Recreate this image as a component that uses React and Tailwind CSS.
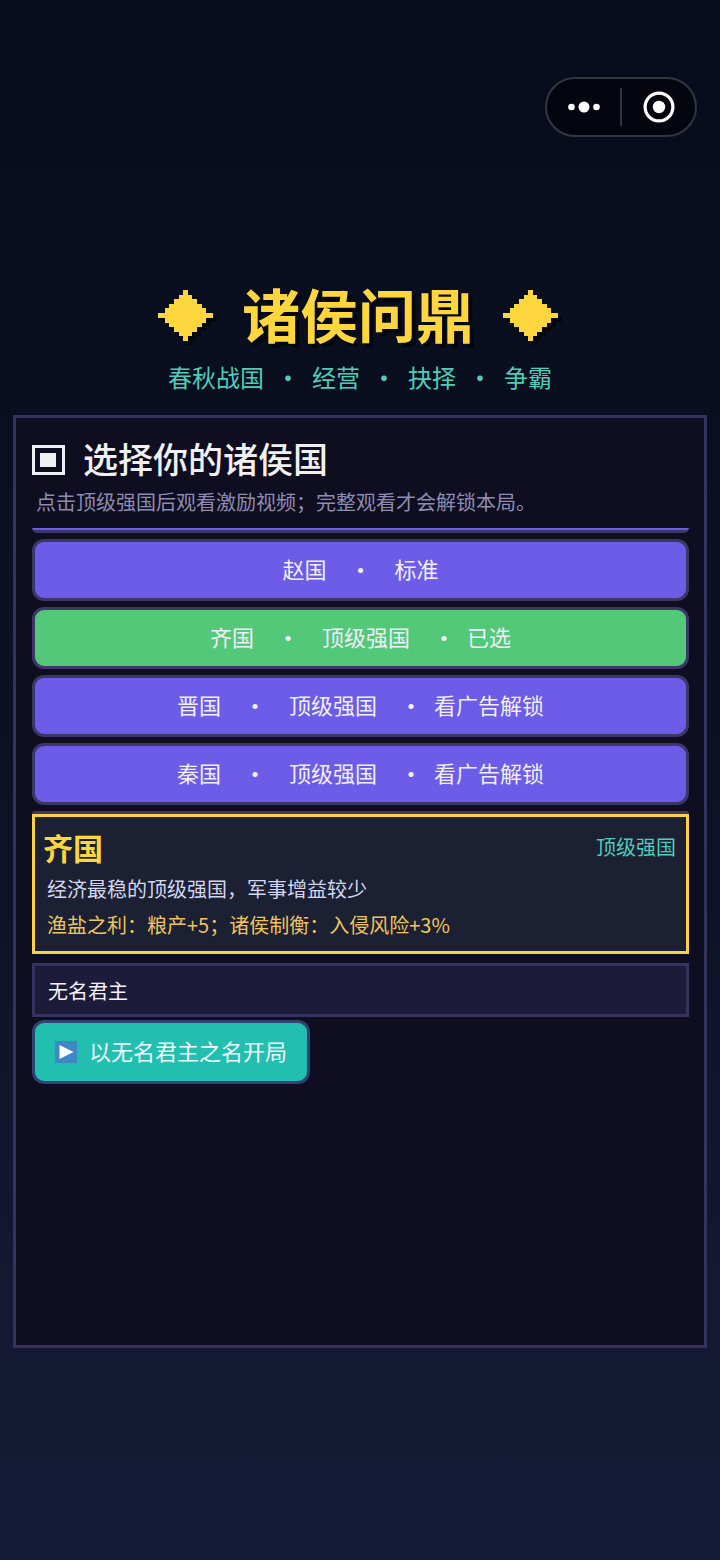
import React, { useState } from 'react';

const kingdoms = [
  { name: '赵国', tier: '标准' },
  { name: '齐国', tier: '顶级强国', status: '已选' },
  { name: '晋国', tier: '顶级强国', status: '看广告解锁' },
  { name: '秦国', tier: '顶级强国', status: '看广告解锁' },
];

const Diamond = () => (
  <svg viewBox="0 0 55 51" className="w-[55px] h-[51px] drop-shadow-[4px_4px_0_#04060e]" fill="#ffd63d" shapeRendering="crispEdges" aria-hidden="true">
    <path d="M25 0h5v5h4v4h5v5h5v4h4v5h7v5h-7v5h-4v4h-5v5h-5v4h-4v5h-5v-5h-4v-4h-5v-5h-5v-4h-4v-5h-7v-5h7v-5h4v-4h5v-5h5v-4h4z" />
  </svg>
);

const KingdomButton = ({ kingdom }) => (
  <button
    type="button"
    className={`flex w-full h-[62px] shrink-0 items-center justify-center rounded-xl border-3 border-[#3b3868] pb-1 text-[22px] leading-8 text-[#f0effc] ${kingdom.status === '已选' ? 'bg-[#52c878]' : 'bg-[#6c5ce7]'}`}
  >
    <span>{kingdom.name}</span>
    <span className="w-6 mx-[22px] text-center font-medium">·</span>
    <span>{kingdom.tier}</span>
    {kingdom.status && (
      <>
        <span className="w-6 ml-[22px] mr-[11px] text-center font-medium">·</span>
        <span>{kingdom.status}</span>
      </>
    )}
  </button>
);

const App = () => {
  const [ruler, setRuler] = useState('无名君主');

  return (
    <div className="min-h-screen flex flex-col bg-linear-to-b from-[#060c1b] via-[#0c1224] to-[#161c38] px-[13px] pb-[212px] font-['Noto_Sans_CJK_SC',sans-serif]">
      {/* Mini program capsule */}
      <div className="flex justify-end pt-[77px] pr-[10px]">
        <div className="flex w-[152px] h-[60px] items-center rounded-full border-2 border-[#33363f] bg-[#03060f]">
          <button type="button" aria-label="更多" className="flex-1 flex justify-center">
            <svg viewBox="0 0 32 12" className="w-8 h-3" fill="#fff">
              <circle cx="3.5" cy="6" r="3.3" />
              <circle cx="16" cy="6" r="5.5" />
              <circle cx="28.5" cy="6" r="3.3" />
            </svg>
          </button>
          <div className="w-[2px] h-[38px] bg-[#33363f]" />
          <button type="button" aria-label="关闭" className="flex-1 flex justify-center">
            <svg viewBox="0 0 32 32" className="w-8 h-8" fill="none">
              <circle cx="16" cy="16" r="13.9" stroke="#fff" strokeWidth="3.2" />
              <circle cx="16" cy="16" r="6.2" fill="#fff" />
            </svg>
          </button>
        </div>
      </div>

      {/* Title */}
      <header className="flex flex-col items-center pt-[146px]">
        <div className="flex items-center gap-[29px] h-16 pr-1">
          <Diamond />
          <h1 className="pb-1 text-[58px] leading-16 font-bold text-[#ffd63d] [text-shadow:4px_4px_0_#04060e]">诸侯问鼎</h1>
          <Diamond />
        </div>
        <p className="flex pt-[14px] text-2xl leading-8 text-[#4ecdb9]">
          <span>春秋战国</span>
          <span className="w-12 text-center font-medium">·</span>
          <span>经营</span>
          <span className="w-12 text-center font-medium">·</span>
          <span>抉择</span>
          <span className="w-12 text-center font-medium">·</span>
          <span>争霸</span>
        </p>
      </header>

      {/* Kingdom selection */}
      <main className="mt-[22px] flex-1 border-3 border-[#353260] bg-[#0e0e20] pl-4 pr-[15px] pt-4">
        <h2 className="flex items-center gap-[18px] text-[35px] leading-12 font-medium text-[#f0f0f0]">
          <svg viewBox="0 0 33 30" className="w-[33px] h-[30px]" shapeRendering="crispEdges" aria-hidden="true">
            <rect x="1.5" y="1.5" width="30" height="27" fill="none" stroke="#f0f0f0" strokeWidth="3" />
            <rect x="8" y="8" width="16" height="14" fill="#f0f0f0" />
          </svg>
          <span className="pb-1">选择你的诸侯国</span>
        </h2>
        <p className="px-1 text-xl leading-8 text-[#8e8cb2]">点击顶级强国后观看激励视频；完整观看才会解锁本局。</p>

        {/* the list runs on past its top and bottom edges */}
        <div className="mt-[10px] flex flex-col gap-[6px]">
          <div className="h-[5px] rounded-b-xl border-b-3 border-[#3b3868] bg-[#6c5ce7]" />
          {kingdoms.map((k) => (
            <KingdomButton key={k.name} kingdom={k} />
          ))}
          <div className="h-[3px] rounded-t-xl bg-[#3b3868]" />
        </div>

        {/* Selected kingdom */}
        <section className="border-3 border-[#f9d342] bg-[#1b2033] px-2 pt-2 pb-[10px]">
          <div className="flex items-center justify-between pr-[2px]">
            <h3 className="pb-1 text-3xl leading-11 font-bold text-[#ffd63d]">齐国</h3>
            <span className="pb-1 text-xl leading-8 text-[#4ecdb9]">顶级强国</span>
          </div>
          <p className="pl-1 text-xl leading-8 text-[#d4d6ee]">经济最稳的顶级强国，军事增益较少</p>
          <p className="pl-1 pt-1 text-xl leading-8 text-[#f0c45c]">渔盐之利：粮产+5；诸侯制衡：入侵风险+3%</p>
        </section>

        <input
          type="text"
          aria-label="君主名号"
          value={ruler}
          onChange={(e) => setRuler(e.target.value)}
          className="mt-[9px] block w-full h-[54px] border-3 border-[#353260] bg-[#1c1b3a] px-[13px] text-xl text-[#f4f4fa] outline-none"
        />
        <button type="button" className="mt-[3px] flex h-16 items-center gap-3 rounded-xl border-3 border-[#2f4470] bg-[#22bfb0] px-5 text-[22px] leading-8 text-[#f0fbfa]">
          <svg viewBox="0 0 22 22" className="w-[22px] h-[22px]" aria-hidden="true">
            <rect width="22" height="22" fill="#3f88c5" />
            <path d="M4.500 4v14l14-7z" fill="#fff" />
          </svg>
          <span className="pb-1">以{ruler}之名开局</span>
        </button>
      </main>
    </div>
  );
};

export default App;
